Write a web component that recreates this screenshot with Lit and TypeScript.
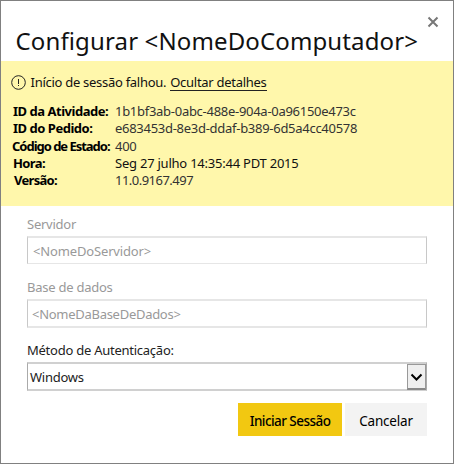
import { LitElement, html, css } from "lit";
import { customElement } from "lit/decorators.js";

@customElement("app-root")
export class AppRoot extends LitElement {
  static styles = css`
    :host { display: block; }
    * { box-sizing: border-box; }
    .dialog {
      position: relative; width: 454px; height: 464px; background: #fff;
      border: 1px solid #808080; color: #222; overflow: hidden;
      font: 13px/18px "Noto Sans", "Open Sans", sans-serif; white-space: nowrap;
      letter-spacing: -.25px;
    }
    .close { position: absolute; left: 426px; top: 15px; width: 12px; height: 12px; }
    .title {
      margin: 0; height: 60px; padding: 24px 0 0 14.5px; color: #111;
      font-size: 24px; line-height: 32px; font-weight: 400; letter-spacing: .13px;
    }
    .alert { height: 145px; background: #fff7ab; padding: 12px 0 0 10px; }
    .status { display: flex; align-items: center; height: 18px; color: #111; letter-spacing: -.28px; }
    .status svg { margin-right: 4.5px; }
    .link { margin-left: 4px; height: 17px; border-bottom: 1px solid #222; line-height: 17px; }
    .details {
      display: grid; grid-template-columns: 102px auto; grid-template-rows: 17px 18px 17px 17px 17px;
      margin: 11px 0 0 2px; color: #333; letter-spacing: -.28px;
    }
    .details b { color: #000; font-weight: 700; letter-spacing: -.48px; }
    .details .k3 { letter-spacing: -1.02px; margin-left: -1px; }
    .details .k4 { letter-spacing: -.6px; }
    .details .k5 { letter-spacing: -.7px; margin-left: 1px; }
    .details .v4 { letter-spacing: -.23px; color: #111; }
    .details .v5 { letter-spacing: -.52px; }
    .form { padding: 9px 26px 0; }
    .label { height: 21px; display: block; }
    .muted { color: #999; }
    .input {
      height: 28px; margin-bottom: 14px; padding: 4px 0 0 5px; color: #999; letter-spacing: -.15px;
      border: 1px solid #c8c8c8; border-top: 2px solid #e6e6e6; border-bottom-color: #e6e6e6;
    }
    .database { padding-left: 4px; letter-spacing: -.28px; border-bottom-width: 2px; height: 29px; margin-bottom: 13px; }
    .select {
      display: flex; justify-content: space-between; height: 29px;
      border: 1px solid #aaa; border-top: 2px solid #d0d0d0; border-bottom: 2px solid #d0d0d0;
    }
    .value { padding: 4px 0 0 2px; }
    .arrow { width: 19px; height: 26px; background: #efefef; border: 1px solid #999; border-bottom: 2px solid #888; }
    .arrow svg { display: block; }
    .actions { display: flex; justify-content: flex-end; gap: 3px; margin-top: 12px; color: #000; }
    .btn { height: 33px; display: flex; justify-content: center; padding-top: 9px; font-size: 13.5px; }
    .primary { width: 104px; background: #f2c811; letter-spacing: -.55px; font-weight: 500; }
    .secondary { width: 82px; background: #f3f3f3; letter-spacing: -.2px; }
  `;
  render() {
    return html`<div class="dialog">
      <svg class="close" viewBox="0 0 12 12"><path d="M1.5 1.5 10.5 10.5M10.5 1.5 1.5 10.5" stroke="#777" stroke-width="2" fill="none"/></svg>
      <h1 class="title">Configurar &lt;NomeDoComputador&gt;</h1>
      <section class="alert">
        <div class="status">
          <svg width="15" height="15" viewBox="0 0 15 15"><circle cx="7.5" cy="7.5" r="6.8" fill="none" stroke="#222"/><path d="M7.5 4V9M7.5 10V11" stroke="#222" fill="none"/></svg>
          <span>Início de sessão falhou.</span><span class="link">Ocultar detalhes</span>
        </div>
        <div class="details">
          <b>ID da Atividade:</b><span>1b1bf3ab-0abc-488e-904a-0a96150e473c</span>
          <b>ID do Pedido:</b><span>e683453d-8e3d-ddaf-b389-6d5a4cc40578</span>
          <b class="k3">Código de Estado:</b><span>400</span>
          <b class="k4">Hora:</b><span class="v4">Seg 27 julho 14:35:44 PDT 2015</span>
          <b class="k5">Versão:</b><span class="v5">11.0.9167.497</span>
        </div>
      </section>
      <section class="form">
        <label class="label muted">Servidor</label><div class="input">&lt;NomeDoServidor&gt;</div>
        <label class="label muted">Base de dados</label><div class="input database">&lt;NomeDaBaseDeDados&gt;</div>
        <label class="label">Método de Autenticação:</label>
        <div class="select"><span class="value">Windows</span><div class="arrow"><svg width="17" height="23" viewBox="0 0 17 23"><path d="M3.5 9.5 8.5 14.5 13.5 9.5" fill="none" stroke="#000" stroke-width="2"/></svg></div></div>
        <div class="actions"><div class="btn primary">Iniciar Sessão</div><div class="btn secondary">Cancelar</div></div>
      </section>
    </div>`;
  }
}
